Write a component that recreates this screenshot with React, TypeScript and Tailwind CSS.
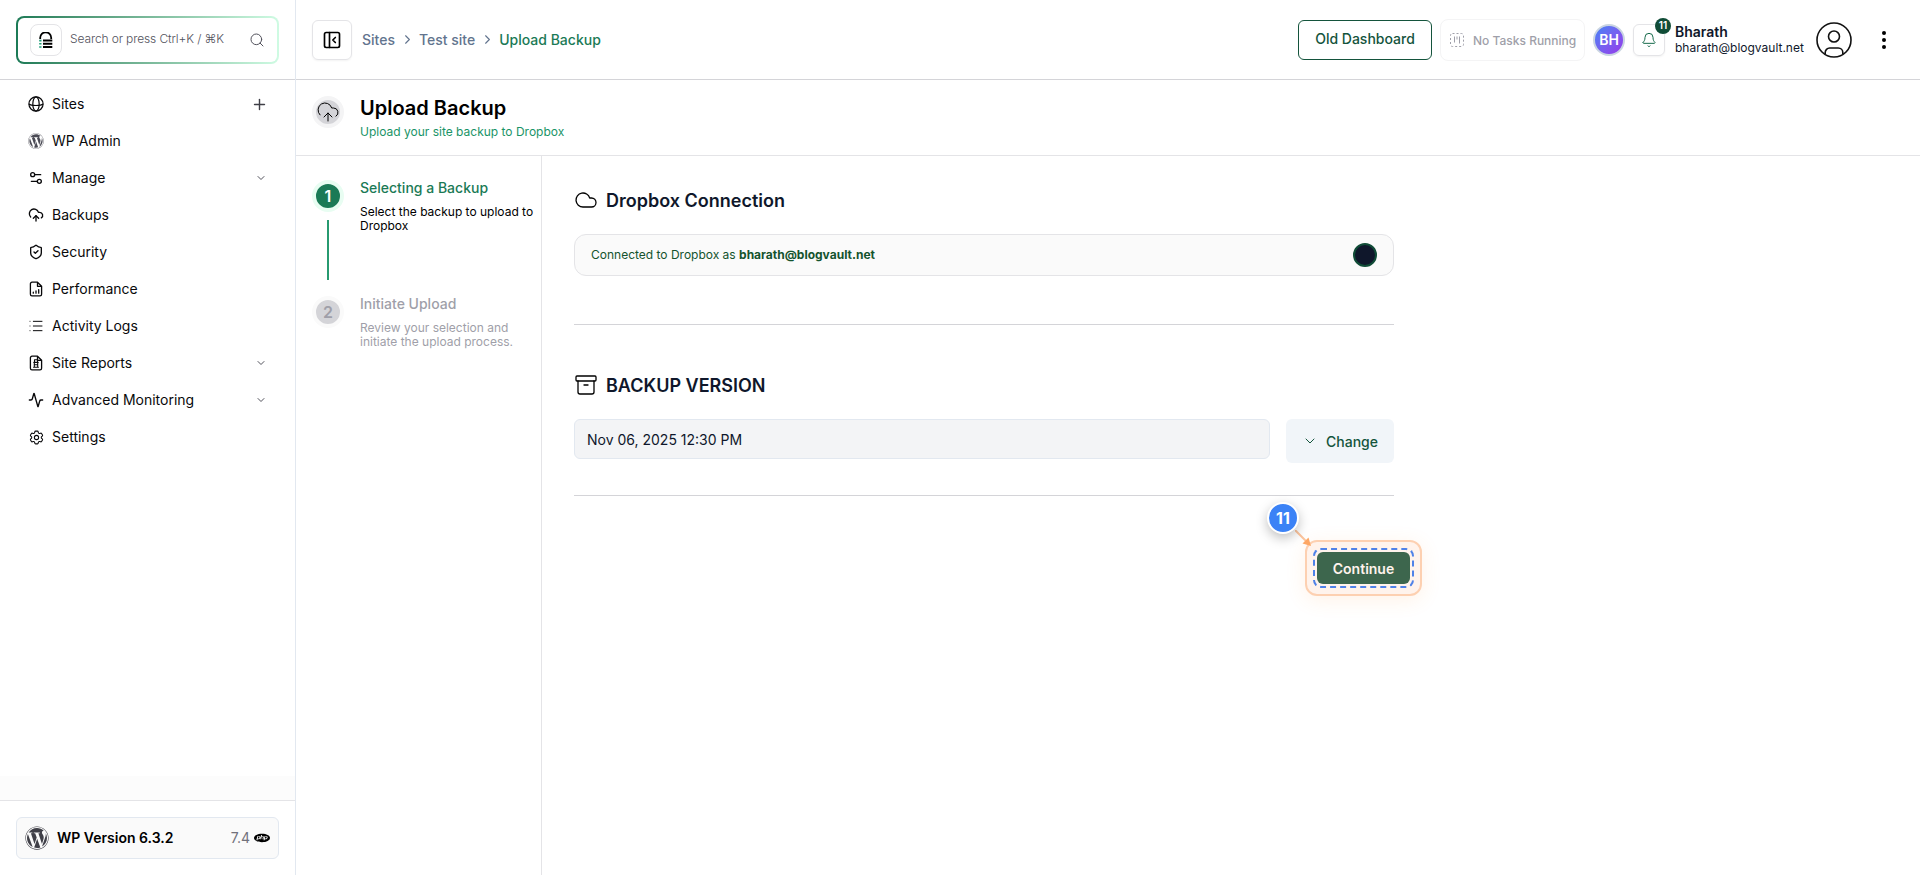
import React from 'react';
import {
  Activity,
  Archive,
  Bell,
  ChevronDown,
  ChevronRight,
  Cloud,
  CloudUpload,
  List,
  PanelLeftClose,
  Plus,
  Search,
  Settings2,
  ShieldCheck
} from 'lucide-react';
import { FaWordpress } from 'react-icons/fa';
import { HiOutlineCog6Tooth } from 'react-icons/hi2';
import { SiPhp } from 'react-icons/si';

interface NavItem {
  label: string;
  icon: React.ReactNode;
  trailing?: 'plus' | 'chevron';
}

const GlobeIcon = () => (
  <svg className="size-4" viewBox="0 0 16 16" fill="none" stroke="currentColor" strokeWidth="1.2">
    <circle cx="8" cy="8" r="7.1" />
    <ellipse cx="8" cy="8" rx="3.2" ry="7.1" />
    <path d="M1 8C3 10 13 10 15 8" strokeWidth="1.1" />
  </svg>
);

const PerformanceIcon = () => (
  <svg className="size-4" viewBox="0 0 16 16" fill="none" stroke="currentColor" strokeWidth="1.3" strokeLinecap="round" strokeLinejoin="round">
    <path d="M9.5 1.2H4A1.6 1.6 0 0 0 2.4 2.8v10.4A1.6 1.6 0 0 0 4 14.8h8a1.6 1.6 0 0 0 1.6-1.6V5.3L9.5 1.2v4.1h4.1" />
    <path d="M5.3 12.2v-1M8 12.2V10M10.7 12.2V8.6" />
  </svg>
);

const ReportIcon = () => (
  <svg className="size-4" viewBox="0 0 16 16" fill="none" stroke="currentColor" strokeWidth="1.3" strokeLinecap="round" strokeLinejoin="round">
    <path d="M9.5 1.2H4A1.6 1.6 0 0 0 2.4 2.8v10.4A1.6 1.6 0 0 0 4 14.8h8a1.6 1.6 0 0 0 1.6-1.6V5.3L9.5 1.2v4.1h4.1" />
    <path d="M6.5 4.8h3v2.4h-3zM5.8 7.4h4.4M6.3 7.4v4.8M9.7 7.4v4.8M5.6 12.2h4.8M6.5 9.8h3" strokeWidth="1.1" />
  </svg>
);

const navItems: NavItem[] = [
  { label: 'Sites', icon: <GlobeIcon />, trailing: 'plus' },
  { label: 'WP Admin', icon: <FaWordpress className="size-4 text-[#4b4b55]" /> },
  { label: 'Manage', icon: <Settings2 className="size-4" />, trailing: 'chevron' },
  { label: 'Backups', icon: <CloudUpload className="size-4" /> },
  { label: 'Security', icon: <ShieldCheck className="size-4" /> },
  { label: 'Performance', icon: <PerformanceIcon /> },
  { label: 'Activity Logs', icon: <List className="size-4" strokeWidth={1.5} /> },
  { label: 'Site Reports', icon: <ReportIcon />, trailing: 'chevron' },
  { label: 'Advanced Monitoring', icon: <Activity className="size-4" />, trailing: 'chevron' },
  { label: 'Settings', icon: <HiOutlineCog6Tooth className="size-[17px]" /> }
];

const LockLogo = () => (
  <svg className="size-4" viewBox="0 0 16 16" fill="none">
    <path d="M2.2 7V5.8a5.5 5.5 0 0 1 11 0V7" stroke="#000" strokeWidth="1.8" />
    <path d="M5 8.6h9.3M5 11.8h9.3M5 15h9.3" stroke="#000" strokeWidth="2" />
    <path d="M1.2 8.6h2.3M1.2 11.8h2.3M1.2 15h2.3" stroke="#1f9d78" strokeWidth="1.6" />
  </svg>
);

const Sidebar: React.FC = () => (
  <aside className="flex w-[296px] shrink-0 flex-col border-r border-slate-200">
    <div className="h-20 shrink-0 border-b border-zinc-300 px-4 pt-4">
      <div className="h-12 w-[263px] rounded-lg bg-gradient-to-r from-[#1b7a56] to-[#cffbe3] p-0.5">
        <div className="flex h-full items-center rounded-md bg-white px-3">
          <div className="flex size-8 items-center justify-center rounded-lg border border-zinc-200">
            <LockLogo />
          </div>
          <span className="-mt-0.5 ml-2 grow text-xs font-light tracking-[-0.12px] text-zinc-600">Search or press Ctrl+K / ⌘K</span>
          <Search className="size-4 text-zinc-600" strokeWidth={1.5} />
        </div>
      </div>
    </div>

    <nav className="flex grow flex-col gap-px pt-[6px] pr-[27px] pl-7">
      {navItems.map((item) => (
        <a key={item.label} className="flex h-9 items-center text-sm text-zinc-950">
          <span className="-ml-px flex w-[18px] justify-center">{item.icon}</span>
          <span className="ml-[7px] grow">{item.label}</span>
          {item.trailing === 'plus' && <Plus className="size-[17px] text-zinc-700" strokeWidth={2} />}
          {item.trailing === 'chevron' && <ChevronDown className="mr-px size-3 text-zinc-600" strokeWidth={2} />}
        </a>
      ))}
    </nav>

    <div className="h-6 bg-[#fcfcfc]" />
    <div className="h-[75px] shrink-0 border-t border-zinc-200 px-4 pt-4">
      <div className="flex h-[42px] w-[263px] items-center rounded-md border border-slate-200 bg-[#fafafa] px-2">
        <FaWordpress className="size-6 text-zinc-700" />
        <span className="ml-2 grow text-sm font-semibold">WP Version 6.3.2</span>
        <span className="text-sm text-zinc-500">7.4</span>
        <SiPhp className="ml-1 size-4" />
      </div>
    </div>
  </aside>
);

const TopBar: React.FC = () => (
  <header className="flex h-20 shrink-0 items-center border-b border-zinc-300 pl-4">
    <button className="flex size-10 items-center justify-center rounded-md border border-zinc-200 shadow-xs">
      <PanelLeftClose className="size-5" strokeWidth={2} />
    </button>
    <div className="ml-2.5 flex items-center text-sm font-medium text-slate-500">
      <span>Sites</span>
      <ChevronRight className="mr-1 ml-[5px] size-[15px]" strokeWidth={1.8} />
      <span>Test site</span>
      <ChevronRight className="mr-1 ml-[5px] size-[15px]" strokeWidth={1.8} />
      <span className="text-[#1b7a56]">Upload Backup</span>
    </div>

    <div className="ml-auto flex items-center">
      <button className="h-10 w-[134px] rounded-md border border-[#14543c] pb-0.5 text-sm font-medium text-[#14543c]">Old Dashboard</button>
      <div className="ml-2 flex h-[42px] w-[145px] items-center rounded-lg border border-zinc-100 pl-[9px] text-xs font-medium text-zinc-400">
        <svg className="size-[14px]" viewBox="0 0 14 14" fill="none" stroke="currentColor">
          <rect x="0.5" y="0.5" width="13" height="13" rx="2" strokeDasharray="2 2" />
          <path d="M4.5 3.5v6M7 3.5v3M9.5 3.5v7" />
        </svg>
        <span className="mt-[3px] ml-[9px] whitespace-nowrap">No Tasks Running</span>
      </div>
      <div className="ml-2 flex size-8 items-center justify-center rounded-full border-2 border-slate-300 bg-gradient-to-br from-[#3b82f6] to-[#9333ea] text-sm font-semibold text-white">
        BH
      </div>
      <div className="relative ml-2 flex size-8 items-center justify-center rounded-md border border-zinc-200 shadow-xs">
        <Bell className="size-4 text-[#14694a]" strokeWidth={1.5} />
        <span className="absolute -top-[7px] -right-[7px] flex size-4 items-center justify-center rounded-full bg-[#104c37] text-[10px] font-semibold text-white">11</span>
      </div>
      <div className="ml-2.5 w-[129px] text-slate-900">
        <p className="text-sm leading-4 font-semibold">Bharath</p>
        <p className="text-xs leading-4">bharath@blogvault.net</p>
      </div>
      <svg className="ml-3 size-9" viewBox="0 0 36 36" fill="none" stroke="#111" strokeWidth="1.6">
        <circle cx="18" cy="18" r="17" />
        <circle cx="18" cy="14.5" r="5.5" />
        <path d="M9.2 32v-1.5a4.5 4.5 0 0 1 4.5-4.5h8.6a4.5 4.5 0 0 1 4.5 4.5V32" />
      </svg>
      <svg className="mr-[34px] ml-[30px] h-5 w-1" viewBox="0 0 4 20" fill="#000">
        <circle cx="2" cy="3" r="2" />
        <circle cx="2" cy="10" r="2" />
        <circle cx="2" cy="17" r="2" />
      </svg>
    </div>
  </header>
);

const Stepper: React.FC = () => (
  <div className="flex w-[246px] shrink-0 flex-col border-r border-zinc-200 pt-6 pl-4">
    <div className="flex h-[116px]">
      <div className="flex w-8 flex-col items-center">
        <div className="flex size-8 items-center justify-center rounded-full border-4 border-[#e8fdf2] bg-[#1b7a56] font-semibold text-white">1</div>
        <div className="mt-2 h-[60px] w-0.5 bg-[#279a70]" />
      </div>
      <div className="ml-4">
        <h3 className="-mt-0.5 text-sm leading-5 font-medium text-[#1b7a56]">Selecting a Backup</h3>
        <p className="mt-[7px] text-xs leading-[14px]">Select the backup to upload to Dropbox</p>
      </div>
    </div>
    <div className="flex">
      <div className="flex size-8 items-center justify-center rounded-full border-4 border-zinc-50 bg-zinc-300 font-semibold text-zinc-400">2</div>
      <div className="ml-4 w-[160px] text-zinc-400">
        <h3 className="-mt-0.5 text-sm leading-5 font-medium">Initiate Upload</h3>
        <p className="mt-[7px] text-xs leading-[14px]">Review your selection and initiate the upload process.</p>
      </div>
    </div>
  </div>
);

const App: React.FC = () => (
  <div className="flex h-[875px] w-full overflow-hidden bg-white font-['Inter',sans-serif] text-black">
    <Sidebar />
    <div className="flex grow flex-col">
      <TopBar />
      <div className="flex h-[76px] shrink-0 border-b border-zinc-200 pt-4 pl-4">
        <div className="flex size-8 items-center justify-center rounded-full border-4 border-zinc-100 bg-zinc-300">
          <CloudUpload className="size-6 shrink-0" strokeWidth={1} />
        </div>
        <div className="ml-4">
          <h1 className="-mt-1 text-xl leading-8 font-semibold">Upload Backup</h1>
          <p className="text-xs leading-4 text-[#1a9467]">Upload your site backup to Dropbox</p>
        </div>
      </div>

      <div className="flex grow">
        <Stepper />
        <main className="w-[852px] pt-8 pl-8">
          <section className="h-[137px] border-b border-zinc-300">
            <h2 className="flex h-6 items-center gap-2 text-lg leading-6 font-semibold text-slate-900">
              <Cloud className="size-6 text-black" strokeWidth={1.3} />
              <span className="mt-0.5">Dropbox Connection</span>
            </h2>
            <div className="mt-[22px] flex h-[42px] items-center justify-between rounded-xl border border-zinc-200 bg-[#fafafa] px-4 text-xs text-[#14532d]">
              <p>
                Connected to Dropbox as <strong className="font-bold">bharath@blogvault.net</strong>
              </p>
              <span className="size-6 rounded-full border-2 border-[#104c37] bg-slate-900" />
            </div>
          </section>

          <section className="h-[171px] border-b border-zinc-300 pt-12">
            <h2 className="flex h-6 items-center gap-2 text-lg leading-6 font-semibold text-slate-900">
              <Archive className="size-6 text-black" strokeWidth={1.3} />
              <span className="mt-0.5">BACKUP VERSION</span>
            </h2>
            <div className="mt-[22px] flex items-start gap-4">
              <div className="flex h-10 grow items-center rounded-md border border-slate-200 bg-[#f3f4f6] px-3 pt-0.5 text-sm text-slate-900">Nov 06, 2025 12:30 PM</div>
              <button className="flex h-11 w-[108px] items-center rounded-md bg-slate-100 pl-4 text-sm font-medium text-[#14543c]">
                <ChevronDown className="size-4" strokeWidth={1.5} />
                <span className="mt-0.5 ml-2">Change</span>
              </button>
            </div>
          </section>

          <div className="mt-11 -mr-7 flex justify-end">
            <div className="relative rounded-xl border-2 border-[#fdd0b1] bg-[#fff3ec] p-1.5 shadow-[0_4px_20px_rgba(251,146,60,0.12)]">
              <div className="rounded-lg border-2 border-dashed border-[#4f82e8] p-0.5">
                <button className="block h-8 w-[93px] rounded-md bg-[#3d664d] pt-0.5 text-sm font-semibold text-[#fff3ec]">Continue</button>
              </div>
              <svg className="absolute -top-3 -left-3 size-[18px]" viewBox="0 0 18 18">
                <path d="M0 0l12 12" stroke="#fcc49d" strokeWidth="2" />
                <path d="M16 16L7.5 13.5L13.5 7.5z" fill="#fda765" />
              </svg>
              <span className="absolute -top-10 -left-10 flex size-8 items-center justify-center rounded-full border-2 border-white bg-[#3b82f6] text-base font-bold text-white shadow-[0_4px_12px_rgba(0,0,0,0.25)]">
                11
              </span>
            </div>
          </div>
        </main>
      </div>
    </div>
  </div>
);

export default App;
